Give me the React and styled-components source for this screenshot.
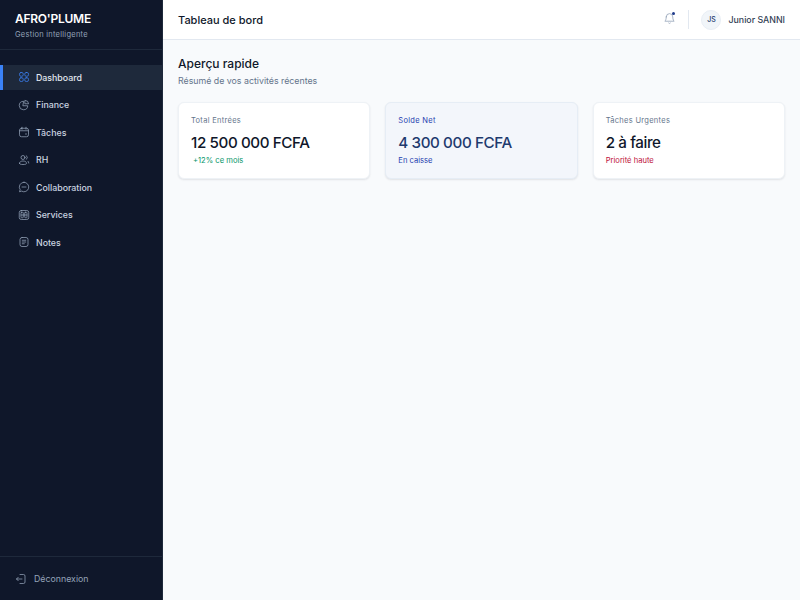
import styled, { createGlobalStyle } from "styled-components";

const GlobalStyle = createGlobalStyle`
  html, body {
    margin: 0;
    padding: 0;
    height: 100%;
  }
  body {
    font-family: Inter, "Liberation Sans", sans-serif;
    background: #f8fafc;
  }
  * {
    box-sizing: border-box;
  }
`;

const Layout = styled.div`
  display: flex;
  width: 800px;
  height: 600px;
  overflow: hidden;
`;

const Sidebar = styled.aside`
  width: 163px;
  flex-shrink: 0;
  display: flex;
  flex-direction: column;
  background: #0f172a;
  border-right: 1px solid #1e293b;
`;

const Brand = styled.div`
  height: 50px;
  padding: 11px 15px 0;
  border-bottom: 1px solid #1e293b;
`;

const BrandName = styled.div`
  font-size: 12px;
  line-height: 16px;
  font-weight: 600;
  letter-spacing: -0.25px;
  color: #fff;
`;

const BrandTag = styled.div`
  margin-top: 3px;
  font-size: 7.5px;
  line-height: 10px;
  letter-spacing: 0.25px;
  color: #94a3b8;
`;

const NavList = styled.nav`
  flex: 1;
  display: flex;
  flex-direction: column;
  gap: 2px;
  padding-top: 14.6px;
`;

const NavItem = styled.a`
  height: 25.5px;
  display: flex;
  align-items: center;
  gap: 6px;
  padding-left: ${(p) => (p.$active ? "15px" : "18px")};
  font-size: 8.8px;
  font-weight: 450;
  color: ${(p) => (p.$active ? "#e2e8f0" : "#cbd5e1")};
  background: ${(p) => (p.$active ? "#1e293b" : "transparent")};
  border-left: ${(p) => (p.$active ? "3px solid #3b82f6" : "none")};
  svg {
    color: ${(p) => (p.$active ? "#3b82f6" : "#94a3b8")};
  }
`;

const SidebarFooter = styled.div`
  height: 44px;
  display: flex;
  align-items: center;
  gap: 7px;
  padding-left: 15px;
  border-top: 1px solid #1e293b;
  font-size: 8.8px;
  color: #94a3b8;
`;

const Main = styled.div`
  flex: 1;
  min-width: 0;
  display: flex;
  flex-direction: column;
`;

const Header = styled.header`
  height: 40px;
  display: flex;
  align-items: center;
  justify-content: space-between;
  padding: 0 15px;
  background: #fff;
  border-bottom: 1px solid #e2e8f0;
`;

const PageTitle = styled.h1`
  margin: 0;
  font-size: 11px;
  font-weight: 550;
  color: #0f172a;
`;

const HeaderRight = styled.div`
  display: flex;
  align-items: center;
`;

const BellButton = styled.div`
  position: relative;
  width: 13px;
  height: 13px;
  display: flex;
  margin-top: -3px;
  color: #94a3b8;
`;

const BellDot = styled.span`
  position: absolute;
  top: 0;
  right: 1px;
  width: 3px;
  height: 3px;
  border-radius: 50%;
  background: #1e3a8a;
`;

const Divider = styled.div`
  width: 1px;
  height: 19px;
  margin: 0 12px;
  background: #e2e8f0;
`;

const Avatar = styled.div`
  width: 20px;
  height: 20px;
  border-radius: 50%;
  display: flex;
  align-items: center;
  justify-content: center;
  background: #f1f5f9;
  border: 1px solid #e9eef5;
  font-size: 7px;
  font-weight: 500;
  color: #1e3a6e;
`;

const UserName = styled.span`
  margin-left: 7px;
  font-size: 8.8px;
  font-weight: 500;
  color: #334155;
`;

const Content = styled.main`
  flex: 1;
  padding: 15px;
`;

const SectionTitle = styled.h2`
  margin: 0;
  font-size: 12px;
  line-height: 17px;
  font-weight: 500;
  color: #0f172a;
`;

const SectionSub = styled.p`
  margin: 3px 0 0;
  font-size: 8.8px;
  line-height: 12px;
  color: #64748b;
`;

const CardGrid = styled.div`
  display: grid;
  grid-template-columns: repeat(3, 1fr);
  gap: 15px;
  margin-top: 15px;
`;

const Card = styled.div`
  height: 77px;
  padding: 13px 12px 0;
  border-radius: 6px;
  background: ${(p) => (p.$highlight ? "#f3f6fb" : "#fff")};
  border: 1px solid ${(p) => (p.$highlight ? "#e6edf5" : "#eef2f6")};
  box-shadow: 0 1px 2px rgba(15, 23, 42, 0.1);
`;

const CardLabel = styled.div`
  font-size: 7.5px;
  line-height: 10px;
  letter-spacing: 0.3px;
  color: ${(p) => (p.$highlight ? "#1e40af" : "#64748b")};
`;

const CardValue = styled.div`
  margin-top: 6px;
  font-size: 15.2px;
  line-height: 22px;
  font-weight: 550;
  letter-spacing: -0.4px;
  color: ${(p) => (p.$highlight ? "#1e3a6e" : "#0f172a")};
`;

const CardNote = styled.div`
  margin-top: 2px;
  padding-left: ${(p) => (p.$indent ? "2px" : "0")};
  font-size: 7.6px;
  line-height: 10px;
  color: ${(p) => p.$color};
`;

const Icon = ({ children, size = 12 }) => (
  <svg
    width={size}
    height={size}
    viewBox="0 0 24 24"
    fill="none"
    stroke="currentColor"
    strokeWidth="1.5"
    strokeLinecap="round"
    strokeLinejoin="round"
  >
    {children}
  </svg>
);

const navItems = [
  {
    label: "Dashboard",
    active: true,
    icon: (
      <>
        <rect x="3" y="3" width="7.5" height="7.5" rx="3" />
        <rect x="13.5" y="3" width="7.5" height="7.5" rx="3" />
        <rect x="3" y="13.5" width="7.5" height="7.5" rx="3" />
        <rect x="13.5" y="13.5" width="7.5" height="7.5" rx="3" />
      </>
    ),
  },
  {
    label: "Finance",
    icon: (
      <>
        <path d="M10.500 4.500a8.500 8.500 0 1 0 9 9h-9z" />
        <path d="M14.500 2.800a7 7 0 0 1 6.700 6.700h-6.700z" />
      </>
    ),
  },
  {
    label: "Tâches",
    icon: (
      <>
        <rect x="3" y="4.500" width="18" height="17" rx="4" />
        <path d="M3 9.500h18M8 2.500v4M16 2.500v4M15 16h2" />
      </>
    ),
  },
  {
    label: "RH",
    icon: (
      <>
        <circle cx="10" cy="7" r="4" />
        <path d="M3 18.500c0-2.800 3-4.500 7-4.500s7 1.700 7 4.500c0 1.800-2 2.500-7 2.500s-7-.7-7-2.500z" />
        <path d="M16.500 3.500a4 4 0 0 1 0 7M20 14.500c1 .8 1.500 2 1.500 3.500" />
      </>
    ),
  },
  {
    label: "Collaboration",
    icon: (
      <>
        <path d="M12 2.500a9.500 9.500 0 1 1-4.800 17.700L3 21.500l1.300-4.200A9.500 9.500 0 0 1 12 2.500z" />
        <path d="M8 12h8" />
      </>
    ),
  },
  {
    label: "Services",
    icon: (
      <>
        <rect x="2.500" y="3" width="19" height="18" rx="4" />
        <rect x="6" y="6.500" width="4.500" height="11" rx="1" />
        <rect x="13.500" y="6.500" width="4.500" height="11" rx="1" />
        <path d="M6 12h12" />
      </>
    ),
  },
  {
    label: "Notes",
    icon: (
      <>
        <rect x="4" y="3" width="16" height="18" rx="4" />
        <path d="M8.500 8.500h7M8.500 12h7M8.500 15.500h4" />
      </>
    ),
  },
];

const cards = [
  {
    label: "Total Entrées",
    value: "12 500 000 FCFA",
    note: "+12% ce mois",
    color: "#059669",
    indent: true,
  },
  {
    label: "Solde Net",
    value: "4 300 000 FCFA",
    note: "En caisse",
    color: "#1e40af",
    highlight: true,
  },
  {
    label: "Tâches Urgentes",
    value: "2 à faire",
    note: "Priorité haute",
    color: "#be123c",
  },
];

const App = () => {
  return (
    <Layout>
      <GlobalStyle />
      <Sidebar>
        <Brand>
          <BrandName>AFRO'PLUME</BrandName>
          <BrandTag>Gestion intelligente</BrandTag>
        </Brand>
        <NavList>
          {navItems.map((item) => (
            <NavItem key={item.label} $active={item.active}>
              <Icon>{item.icon}</Icon>
              {item.label}
            </NavItem>
          ))}
        </NavList>
        <SidebarFooter>
          <Icon>
            <path d="M10 3h7a3 3 0 0 1 3 3v12a3 3 0 0 1-3 3h-7" />
            <path d="M14 12H3M6.500 8.500 3 12l3.500 3.500" />
          </Icon>
          Déconnexion
        </SidebarFooter>
      </Sidebar>
      <Main>
        <Header>
          <PageTitle>Tableau de bord</PageTitle>
          <HeaderRight>
            <BellButton>
              <Icon size={13}>
                <path d="M6 9a6 6 0 0 1 12 0c0 6 2.500 8 2.500 8h-17S6 15 6 9z" />
                <path d="M10.500 20.500a2 2 0 0 0 3 0" />
              </Icon>
              <BellDot />
            </BellButton>
            <Divider />
            <Avatar>JS</Avatar>
            <UserName>Junior SANNI</UserName>
          </HeaderRight>
        </Header>
        <Content>
          <SectionTitle>Aperçu rapide</SectionTitle>
          <SectionSub>Résumé de vos activités récentes</SectionSub>
          <CardGrid>
            {cards.map((card) => (
              <Card key={card.label} $highlight={card.highlight}>
                <CardLabel $highlight={card.highlight}>{card.label}</CardLabel>
                <CardValue $highlight={card.highlight}>{card.value}</CardValue>
                <CardNote $color={card.color} $indent={card.indent}>
                  {card.note}
                </CardNote>
              </Card>
            ))}
          </CardGrid>
        </Content>
      </Main>
    </Layout>
  );
};

export default App;
